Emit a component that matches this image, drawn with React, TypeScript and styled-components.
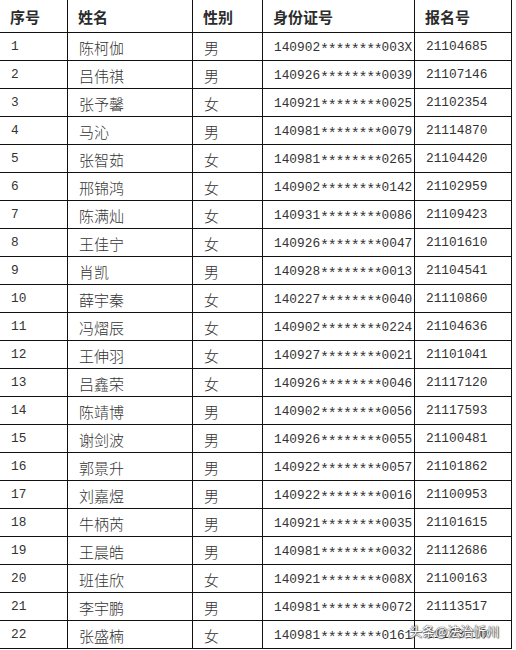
import React from "react";
import styled, { createGlobalStyle } from "styled-components";

type Row = [string, string, string, string, string];

const rows: Row[] = [
  ["1", "陈柯伽", "男", "140902********003X", "21104685"],
  ["2", "吕伟祺", "男", "140926********0039", "21107146"],
  ["3", "张予馨", "女", "140921********0025", "21102354"],
  ["4", "马沁", "男", "140981********0079", "21114870"],
  ["5", "张智茹", "女", "140981********0265", "21104420"],
  ["6", "邢锦鸿", "女", "140902********0142", "21102959"],
  ["7", "陈满灿", "女", "140931********0086", "21109423"],
  ["8", "王佳宁", "女", "140926********0047", "21101610"],
  ["9", "肖凯", "男", "140928********0013", "21104541"],
  ["10", "薛宇秦", "女", "140227********0040", "21110860"],
  ["11", "冯熠辰", "女", "140902********0224", "21104636"],
  ["12", "王伸羽", "女", "140927********0021", "21101041"],
  ["13", "吕鑫荣", "女", "140926********0046", "21117120"],
  ["14", "陈靖博", "男", "140902********0056", "21117593"],
  ["15", "谢剑波", "男", "140926********0055", "21100481"],
  ["16", "郭景升", "男", "140922********0057", "21101862"],
  ["17", "刘嘉煜", "男", "140922********0016", "21100953"],
  ["18", "牛柄芮", "男", "140921********0035", "21101615"],
  ["19", "王晨皓", "男", "140981********0032", "21112686"],
  ["20", "班佳欣", "女", "140921********008X", "21100163"],
  ["21", "李宇鹏", "男", "140981********0072", "21113517"],
  ["22", "张盛楠", "女", "140981********0161", "21103610"],
];

const headers = ["序号", "姓名", "性别", "身份证号", "报名号"];
const widths = [68, 125, 70, 152, 97];

const GlobalStyle = createGlobalStyle`
  body {
    margin: 0;
    background: #fff;
  }
`;

// split an ID like 140902********003X into prefix / stars / suffix
function IdNumber({ value }: { value: string }) {
  const m = value.match(/^(\d+)(\*+)(.*)$/);
  if (!m) return <>{value}</>;
  return (
    <>
      {m[1]}
      <Stars>{m[2]}</Stars>
      {m[3]}
    </>
  );
}

export default function App() {
  return (
    <Page>
      <GlobalStyle />
      <Table>
        <colgroup>
          {widths.map((w, i) => (
            <col key={i} style={{ width: w }} />
          ))}
        </colgroup>
        <thead>
          <tr>
            {headers.map((h) => (
              <HeadCell key={h}>{h}</HeadCell>
            ))}
          </tr>
        </thead>
        <tbody>
          {rows.map((r) => (
            <BodyRow key={r[0]}>
              <Cell $mono>{r[0]}</Cell>
              <Cell>{r[1]}</Cell>
              <Cell>{r[2]}</Cell>
              <Cell $mono>
                <IdNumber value={r[3]} />
              </Cell>
              <Cell $mono>{r[4]}</Cell>
            </BodyRow>
          ))}
        </tbody>
      </Table>
      <Watermark>头条@法治忻州</Watermark>
    </Page>
  );
}

const Page = styled.div`
  position: relative;
  width: 516px;
  height: 650px;
  overflow: hidden;
  background: #fff;
`;

const Table = styled.table`
  border-collapse: collapse;
  table-layout: fixed;
  width: 513px;
  margin-left: -1px;
  margin-top: -1px;
`;

const HeadCell = styled.th`
  height: 33px;
  padding: 0 0 0 10px;
  text-align: left;
  border: 1px solid #111;
  border-top-color: transparent;
  font-family: "Noto Sans CJK SC", sans-serif;
  font-weight: 700;
  font-size: 15px;
  color: #2b2b2b;
  box-sizing: border-box;
`;

const BodyRow = styled.tr`
  height: 28px;
`;

const Cell = styled.td<{ $mono?: boolean }>`
  padding: 1px 0 0 11px;
  border: 1px solid #111;
  white-space: nowrap;
  overflow: hidden;
  color: #333;
  font-family: ${(p) =>
    p.$mono ? '"Liberation Mono", monospace' : '"Noto Sans CJK SC", sans-serif'};
  font-size: ${(p) => (p.$mono ? "12.8px" : "15px")};
  font-weight: 300;
  line-height: 1;
`;

const Stars = styled.span`
  position: relative;
  top: 3px;
  font-size: 15px;
  letter-spacing: -1.32px;
`;

const Watermark = styled.div`
  position: absolute;
  left: 409px;
  top: 623px;
  font-family: "Noto Sans CJK SC", sans-serif;
  font-size: 13px;
  line-height: 1.2;
  white-space: nowrap;
  color: #fff;
  text-shadow: 0 0 1px #444, 0 0 1px #444, 1px 1px 1px #666;
`;
